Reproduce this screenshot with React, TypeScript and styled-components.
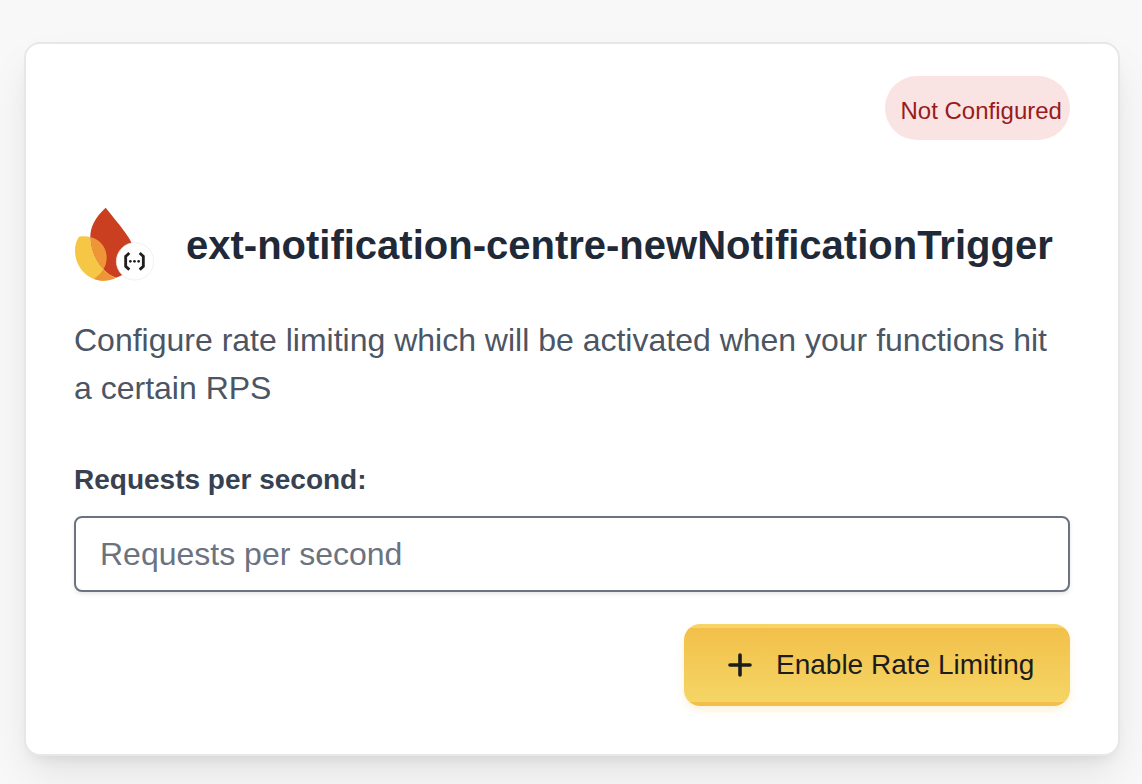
import { useState } from "react";
import styled, { createGlobalStyle } from "styled-components";

function FunctionLogo() {
  return (
    <StyledLogo viewBox="42 33 240 231" aria-hidden="true">
      <path
        d="M137 38 C105 67 91 97 91 126 C92 165 107 199 130 223 C141 235 153 244 168 248 C205 235 224 216 225 182 C225 139 183 96 137 38Z"
        fill="#c93f20"
      />
      <path
        d="M57 125 C49 136 45 149 45 167 C45 213 80 257 130 257 C144 257 156 253 168 248 C153 244 141 235 130 223 C107 199 92 165 91 126 C79 123 68 123 57 125Z"
        fill="#f6c745"
      />
      <path
        d="M91 126 C119 132 140 157 140 188 C140 202 136 214 130 223 C107 199 92 165 91 126Z"
        fill="#ee9538"
      />
      <path
        d="M130 223 C122 236 114 244 102 251 C111 255 120 257 130 257 C144 257 156 253 168 248 C153 244 141 235 130 223Z"
        fill="#ee9538"
      />
      <circle cx="225" cy="199" r="56" fill="#fff" stroke="#e9e9eb" strokeWidth="2" />
      <g fill="none" stroke="#1f1f1f" strokeWidth="8.500">
        <path d="M208 174 L197 184 V214 L208 224" />
        <path d="M239 174 L250 184 V214 L239 224" />
      </g>
      <g fill="#1f1f1f">
        <circle cx="211" cy="199" r="4" />
        <circle cx="223.500" cy="199" r="4" />
        <circle cx="236" cy="199" r="4" />
      </g>
    </StyledLogo>
  );
}

function App() {
  const [rps, setRps] = useState<string>("");

  return (
    <>
      <GlobalStyle />
      <StyledCard>
        <StyledBadge>Not Configured</StyledBadge>
        <StyledHeader>
          <FunctionLogo />
          <StyledTitle>ext-notification-centre-newNotificationTrigger</StyledTitle>
        </StyledHeader>
        <StyledDescription>
          Configure rate limiting which will be activated when your functions hit a certain RPS
        </StyledDescription>
        <StyledLabel htmlFor="rps">Requests per second:</StyledLabel>
        <StyledInput
          id="rps"
          placeholder="Requests per second"
          value={rps}
          onChange={(e) => setRps(e.target.value)}
        />
        <StyledButton type="button">
          <StyledPlus viewBox="0 0 24 24" aria-hidden="true">
            <path d="M12 2 V22 M2 12 H22" />
          </StyledPlus>
          Enable Rate Limiting
        </StyledButton>
      </StyledCard>
    </>
  );
}

export default App;

const GlobalStyle = createGlobalStyle`
  * {
    box-sizing: border-box;
  }

  body {
    margin: 0;
    height: 784px;
    overflow: hidden;
    background-color: #f8f8f8;
    font-family: "Liberation Sans", Arial, sans-serif;
  }

  #root {
    display: flow-root;
  }
`;

const StyledCard = styled.section`
  display: flex;
  flex-direction: column;
  width: 1096px;
  height: 714px;
  margin: 42px 0 0 24px;
  padding: 32px 48px 48px;
  background-color: white;
  border: 2px solid #e5e7eb;
  border-radius: 16px;
  box-shadow: 0 20px 40px -6px rgba(0, 0, 0, 0.1), 0 8px 14px -8px rgba(0, 0, 0, 0.1);
`;

const StyledBadge = styled.span`
  align-self: flex-end;
  width: 185px;
  height: 64px;
  padding: 3px 0 0 15.5px;
  border-radius: 32px;
  background-color: #fae3e3;
  color: #991b1b;
  font-size: 24px;
  line-height: 64px;
  white-space: nowrap;
`;

const StyledHeader = styled.header`
  display: flex;
  align-items: center;
  gap: 32px;
  height: 77px;
  margin-top: 66px;
`;

const StyledLogo = styled.svg`
  flex: none;
  width: 80px;
  height: 77px;
`;

const StyledTitle = styled.h1`
  margin: 0;
  color: #1f2937;
  font-size: 40px;
  font-weight: 700;
  line-height: 56px;
  white-space: nowrap;
`;

const StyledDescription = styled.p`
  margin: 33px 0 0;
  color: #4b5563;
  font-size: 32px;
  line-height: 48px;
`;

const StyledLabel = styled.label`
  margin-top: 48px;
  color: #374151;
  font-size: 28px;
  font-weight: 700;
  line-height: 40px;
`;

const StyledInput = styled.input`
  width: 100%;
  height: 76px;
  margin-top: 16px;
  padding: 0 24px;
  border: 2px solid #6b7280;
  border-radius: 8px;
  background-color: white;
  box-shadow: 0 2px 4px rgba(0, 0, 0, 0.1);
  color: #374151;
  font-family: inherit;
  font-size: 32px;

  &::placeholder {
    color: #6b7280;
    opacity: 1;
  }
`;

const StyledButton = styled.button`
  display: flex;
  align-items: center;
  align-self: flex-end;
  gap: 24px;
  width: 386px;
  height: 82px;
  margin-top: 32px;
  padding: 0 0 0 44px;
  border: none;
  border-radius: 16px;
  background: linear-gradient(#f5d565 0 4px, #f2c04a 4px, #f5d565 78px, #f2c04a 78px);
  box-shadow: 0 4px 8px rgba(242, 192, 74, 0.2);
  color: #1c1c1c;
  font-family: inherit;
  font-size: 28px;
  white-space: nowrap;
`;

const StyledPlus = styled.svg`
  flex: none;
  width: 24px;
  height: 24px;
  fill: none;
  stroke: currentColor;
  stroke-width: 3.6;
  stroke-linecap: round;
`;
